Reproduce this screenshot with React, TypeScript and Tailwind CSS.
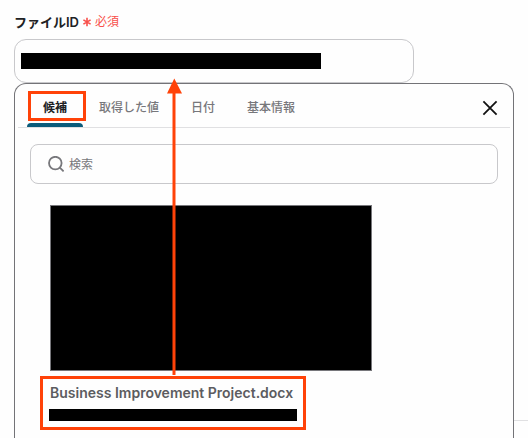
import { useState } from "react";

const tabs = ["候補", "取得した値", "日付", "基本情報"];

function SearchIcon() {
  return (
    <svg className="size-4 shrink-0" viewBox="0 0 16 16" fill="none" stroke="#77777b" strokeWidth="1.8" aria-hidden="true">
      <circle cx="7.3" cy="7.1" r="6.3" />
      <path d="M11.8 11.6 15.6 15.4" />
    </svg>
  );
}

function CloseIcon() {
  return (
    <svg className="size-4" viewBox="0 0 16 16" fill="none" stroke="#111" strokeWidth="1.8" aria-hidden="true">
      <path d="M1.4 1.4 14.6 14.6M14.6 1.4 1.4 14.6" />
    </svg>
  );
}

function RequiredMark() {
  return (
    <svg className="size-[10px]" viewBox="0 0 10 10" fill="none" stroke="#f8504b" strokeWidth="1.6" aria-hidden="true">
      <path d="M5 .8v8.4M1.4 2.9l7.2 4.2M8.6 2.9l-7.2 4.2" />
    </svg>
  );
}

function Arrow() {
  return (
    <svg className="pointer-events-none absolute left-[166px] top-[78px] h-[297px] w-4" viewBox="0 0 16 297" fill="#ff4208" aria-hidden="true">
      <path d="M8.3 0.5 16 15.5H1z" />
      <path d="M6.5 14h3v283h-3z" />
    </svg>
  );
}

export default function App() {
  const [active, setActive] = useState(0);

  return (
    <main className="relative flex h-screen flex-col overflow-hidden bg-[#fefefe] pl-[14px] font-[Inter,'Noto_Sans_CJK_JP',sans-serif] text-[#77777b]">
      <div className="flex h-[39px] items-center gap-[3px] pb-1 pt-2">
        <label htmlFor="file-id" className="text-[13px] font-semibold leading-5 text-[#202124]">
          ファイルID
        </label>
        <RequiredMark />
        <span className="text-xs leading-5 text-[#f8504b]">必須</span>
      </div>

      <div className="pr-[14px]">
        <div className="relative w-4/5">
          <input
            id="file-id"
            type="text"
            className="block h-11 w-full rounded-xl border border-[#c8c8cb] bg-transparent px-2 text-sm outline-none"
          />
          <div className="pointer-events-none absolute left-[7px] top-[14px] h-4 w-3/4 bg-black" />
        </div>
      </div>

      <div className="flex flex-1">
        <section className="min-w-0 flex-1 rounded-t-xl border border-b-0 border-[#737377]">
          <header className="mx-[3px] flex h-11 items-stretch border-b border-[#e0e0e2] pl-[9px] pr-3">
            <div role="tablist" className="flex flex-1">
              {tabs.map((tab, i) => (
                <button
                  key={tab}
                  type="button"
                  role="tab"
                  aria-selected={i === active}
                  onClick={() => setActive(i)}
                  className={
                    i === active
                      ? "relative px-4 pt-1 text-xs font-bold text-[#202124]"
                      : "relative px-4 pt-1 text-xs font-medium"
                  }
                >
                  {tab}
                  {i === active && <span className="absolute inset-x-0 bottom-0 h-1 rounded-t bg-[#0b5c7b]" />}
                  {i === 0 && <span className="absolute -right-[3px] left-px top-[7px] h-[30px] border-3 border-[#ff4208]" />}
                </button>
              ))}
            </div>
            <button type="button" aria-label="閉じる" className="pt-[5px]">
              <CloseIcon />
            </button>
          </header>

          <label className="mx-[15px] mt-4 flex h-10 items-center gap-[5px] rounded-lg border border-[#c8c8cb] pl-[17px] pr-4">
            <SearchIcon />
            <input
              type="text"
              placeholder="検索"
              aria-label="検索"
              className="min-w-0 flex-1 bg-transparent pt-px text-xs outline-none placeholder:text-[#77777b]"
            />
          </label>

          <div className="ml-[35px] mt-[21px] h-[166px] w-[322px] border border-[#77777b] bg-black" />

          <button
            type="button"
            className="ml-[25px] mt-[5px] flex h-[54px] w-[266px] flex-col gap-[6px] border-3 border-[#ff4208] px-[7px] pt-1 text-left"
          >
            <span className="whitespace-nowrap text-sm font-semibold leading-5 text-[#5c5c60]">
              Business Improvement Project.docx
            </span>
            <span className="-ml-px h-3 w-[248px] bg-black" />
          </button>
        </section>
        <div className="h-[18px] w-[14px] self-end border-t border-[#e0e0e2]" />
      </div>

      <Arrow />
    </main>
  );
}
